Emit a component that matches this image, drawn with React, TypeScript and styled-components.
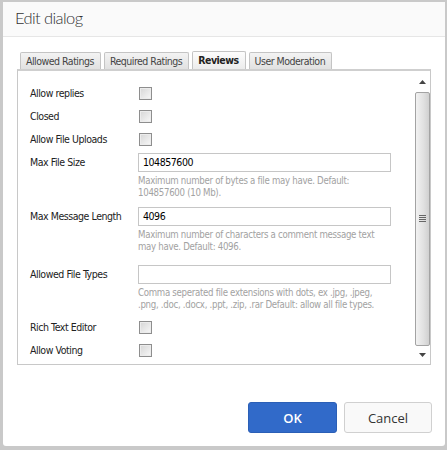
import React from 'react';
import styled, { createGlobalStyle } from 'styled-components';

const Global = createGlobalStyle`
  html, body { margin: 0; padding: 0; }
  body { background: #c9c9c9; width: 447px; height: 450px; overflow: hidden; }
  * { box-sizing: border-box; }
`;

const Dialog = styled.div`
  margin: 2px 0 0 3px;
  width: 442px;
  height: 444px;
  background: #fff;
  border-radius: 0 0 3px 3px;
  display: flex;
  flex-direction: column;
`;

const Header = styled.div`
  height: 35px;
  background: #fafafa;
  border-bottom: 1px solid #e6e6e6;
  padding: 6px 0 0 12px;
  font-family: Lato, "Open Sans", sans-serif;
  font-weight: 300;
  font-size: 16.5px;
  letter-spacing: -0.6px;
  color: #333;
`;

const Body = styled.div`
  padding: 15px 0 0 14px;
`;

const TabStrip = styled.div`
  display: flex;
  align-items: flex-end;
  gap: 3px;
  padding-left: 3px;
  height: 17px;
`;

const Tab = styled.div<{ $active?: boolean }>`
  height: ${p => (p.$active ? 18 : 17)}px;
  padding: 0 6px 0 5px;
  border: 1px solid #c4c4c4;
  border-bottom: none;
  border-radius: 2px 2px 0 0;
  background: ${p =>
    p.$active ? 'linear-gradient(#fdfdfd, #ececec)' : 'linear-gradient(#f3f3f3, #e1e1e1)'};
  font-family: "DejaVu Sans Condensed", "Liberation Sans", sans-serif;
  font-size: 10.5px;
  letter-spacing: -0.5px;
  line-height: ${p => (p.$active ? 17 : 16)}px;
  font-weight: ${p => (p.$active ? 'bold' : 'normal')};
  color: ${p => (p.$active ? '#222' : '#444')};
  white-space: nowrap;
`;

const Panel = styled.div`
  width: 414px;
  height: 296px;
  border: 1px solid #c8c8c8;
  border-top: 2px solid #cfcfcf;
  display: flex;
  overflow: hidden;
`;

const Content = styled.div`
  flex: 1;
  padding: 11px 0 0 12px;
  font-family: "DejaVu Sans Condensed", "Liberation Sans", sans-serif;
  font-size: 10.5px;
  letter-spacing: -0.45px;
  color: #222;
`;

const CheckRow = styled.div`
  display: flex;
  align-items: center;
  height: 23px;
`;

const Label = styled.div`
  width: 108px;
  flex: none;
  line-height: 19px;
`;

const Check = styled.span`
  display: block;
  width: 13px;
  height: 13px;
  margin-left: 1px;
  border: 1px solid #8e8e8e;
  background: linear-gradient(135deg, #d6d6d6, #f8f8f8);
  box-shadow: inset 0 0 0 1px #ececec;
`;

const InputRow = styled.div<{ $top: number; $bottom: number }>`
  display: flex;
  padding-top: ${p => p.$top}px;
  margin-bottom: ${p => p.$bottom}px;
`;

const Field = styled.div`
  display: flex;
  flex-direction: column;
`;

const TextInput = styled.div`
  width: 253px;
  height: 19px;
  border: 1px solid #c6c6c6;
  padding-left: 4px;
  line-height: 17px;
  color: #000;
  background: #fff;
`;

const Help = styled.div`
  margin-top: 3px;
  font-size: 9.6px;
  letter-spacing: -0.3px;
  line-height: 12px;
  color: #a2a2a2;
  white-space: nowrap;
`;

const Scrollbar = styled.div`
  width: 15px;
  flex: none;
  display: flex;
  flex-direction: column;
  background: #fff;
`;

const ArrowBtn = styled.div<{ $h: number }>`
  height: ${p => p.$h}px;
  display: flex;
  align-items: center;
  justify-content: center;
`;

const Thumb = styled.div`
  flex: 1;
  border: 1px solid #a3a3a3;
  border-radius: 2px;
  background: linear-gradient(90deg, #f2f2f2, #e0e0e0 60%, #d0d0d0);
  display: flex;
  align-items: center;
  justify-content: center;
`;

const Footer = styled.div`
  display: flex;
  justify-content: flex-end;
  gap: 7px;
  padding: 37px 13px 0 0;
`;

const Button = styled.button<{ $primary?: boolean }>`
  width: ${p => (p.$primary ? 89 : 88)}px;
  height: 31px;
  border-radius: 3px;
  border: 1px solid ${p => (p.$primary ? '#2b5fb6' : '#d0d0d0')};
  background: ${p => (p.$primary ? '#316ac9' : '#f9f9f9')};
  color: ${p => (p.$primary ? '#fff' : '#333')};
  font-family: "Open Sans", "Noto Sans", sans-serif;
  font-size: 13px;
  font-weight: ${p => (p.$primary ? 600 : 400)};
  padding: 0;
`;

const Up = () => (
  <svg width="7" height="4" viewBox="0 0 7 4">
    <path d="M0 4 L3.5 0 L7 4 Z" fill="#444" />
  </svg>
);
const Down = () => (
  <svg width="7" height="4" viewBox="0 0 7 4">
    <path d="M0 0 L3.5 4 L7 0 Z" fill="#444" />
  </svg>
);
const Grip = () => (
  <svg width="7" height="8" viewBox="0 0 7 8">
    {[0, 2, 4, 6].map(y => (
      <rect key={y} x="0" y={y} width="7" height="1" fill="#666" />
    ))}
  </svg>
);

const checkTop = ['Allow replies', 'Closed', 'Allow File Uploads'];

export default function App() {
  return (
    <>
      <Global />
      <Dialog>
        <Header>Edit dialog</Header>
        <Body>
          <TabStrip>
            <Tab>Allowed Ratings</Tab>
            <Tab>Required Ratings</Tab>
            <Tab $active>Reviews</Tab>
            <Tab>User Moderation</Tab>
          </TabStrip>
          <Panel>
            <Content>
              {checkTop.map(l => (
                <CheckRow key={l}>
                  <Label>{l}</Label>
                  <Check />
                </CheckRow>
              ))}
              <InputRow $top={2} $bottom={6}>
                <Label>Max File Size</Label>
                <Field>
                  <TextInput>104857600</TextInput>
                  <Help>
                    <div>Maximum number of bytes a file may have. Default:</div>
                    <div>104857600 (10 Mb).</div>
                  </Help>
                </Field>
              </InputRow>
              <InputRow $top={2} $bottom={6}>
                <Label>Max Message Length</Label>
                <Field>
                  <TextInput>4096</TextInput>
                  <Help>
                    <div>Maximum number of characters a comment message text</div>
                    <div>may have. Default: 4096.</div>
                  </Help>
                </Field>
              </InputRow>
              <InputRow $top={6} $bottom={5}>
                <Label>Allowed File Types</Label>
                <Field>
                  <TextInput />
                  <Help>
                    <div>Comma seperated file extensions with dots, ex .jpg, .jpeg,</div>
                    <div>.png, .doc, .docx, .ppt, .zip, .rar Default: allow all file types.</div>
                  </Help>
                </Field>
              </InputRow>
              <CheckRow>
                <Label>Rich Text Editor</Label>
                <Check />
              </CheckRow>
              <CheckRow>
                <Label>Allow Voting</Label>
                <Check />
              </CheckRow>
            </Content>
            <Scrollbar>
              <ArrowBtn $h={21}><Up /></ArrowBtn>
              <Thumb><Grip /></Thumb>
              <ArrowBtn $h={18}><Down /></ArrowBtn>
            </Scrollbar>
          </Panel>
        </Body>
        <Footer>
          <Button $primary>OK</Button>
          <Button>Cancel</Button>
        </Footer>
      </Dialog>
    </>
  );
}
